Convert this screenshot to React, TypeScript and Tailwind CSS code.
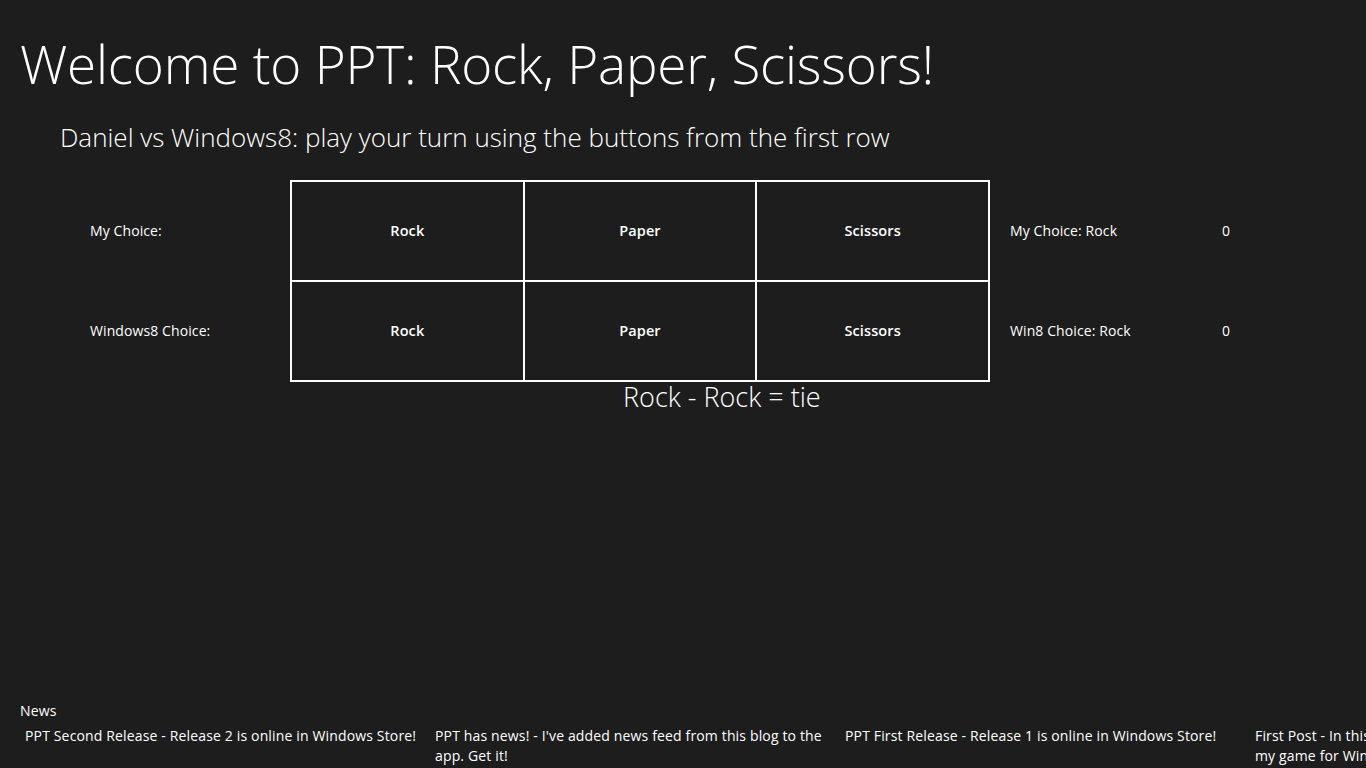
import React from 'react';

const choices = ['Rock', 'Paper', 'Scissors'];

const news = [
    'PPT Second Release - Release 2 is online in Windows Store!',
    "PPT has news! - I've added news feed from this blog to the app. Get it!",
    'PPT First Release - Release 1 is online in Windows Store!',
    'First Post - In this blog I will write about the development of my game for Windows 8',
];

export default function App() {
    return (
        <div
            className="bg-[#1d1d1d] text-white w-[1366px] h-[768px] overflow-hidden flex flex-col"
            style={{ fontFamily: '"Open Sans", "Noto Sans", sans-serif' }}
        >
            <h1 className="pl-[20px] pt-[27px] text-[53px] leading-[74px] font-light tracking-[-0.2px] whitespace-nowrap">
                Welcome to PPT: Rock, Paper, Scissors!
            </h1>
            <h2 className="pl-[60px] pt-[19px] text-[26px] leading-[34px] font-light whitespace-nowrap">
                Daniel vs Windows8: play your turn using the buttons from the first row
            </h2>

            {/* game board */}
            <div className="mt-[26px] flex tracking-[0.1px]">
                <div className="w-[290px] pl-[90px] flex flex-col text-[14px]">
                    <div className="h-[100px] flex items-center">My Choice:</div>
                    <div className="h-[100px] flex items-center">Windows8 Choice:</div>
                </div>
                <div className="w-[700px] grid grid-cols-3 border-[1px] border-white">
                    {[0, 1].map((row) =>
                        choices.map((c) => (
                            <button
                                key={row + c}
                                className="h-[100px] border-[1px] border-white bg-[#1d1d1d] text-[14.5px] font-semibold text-white"
                            >
                                {c}
                            </button>
                        ))
                    )}
                </div>
                <div className="pl-[20px] flex flex-col text-[14px]">
                    <div className="h-[100px] flex items-center">
                        <span className="w-[212px]">My Choice: Rock</span>
                        <span>0</span>
                    </div>
                    <div className="h-[100px] flex items-center">
                        <span className="w-[212px]">Win8 Choice: Rock</span>
                        <span>0</span>
                    </div>
                </div>
            </div>
            <div className="pl-[623px] text-[27px] leading-[32px] font-light -mt-[1px]">Rock - Rock = tie</div>

            {/* news feed */}
            <div className="mt-auto pl-[20px] tracking-[0.15px]">
                <div className="text-[14px] leading-[20px] mb-[5px]">News</div>
                <div className="flex text-[14px] leading-[20px] pl-[5px] h-[42px]">
                    {news.map((n) => (
                        <div key={n} className="w-[410px] shrink-0 pr-[8px]">
                            {n}
                        </div>
                    ))}
                </div>
            </div>
        </div>
    );
}
